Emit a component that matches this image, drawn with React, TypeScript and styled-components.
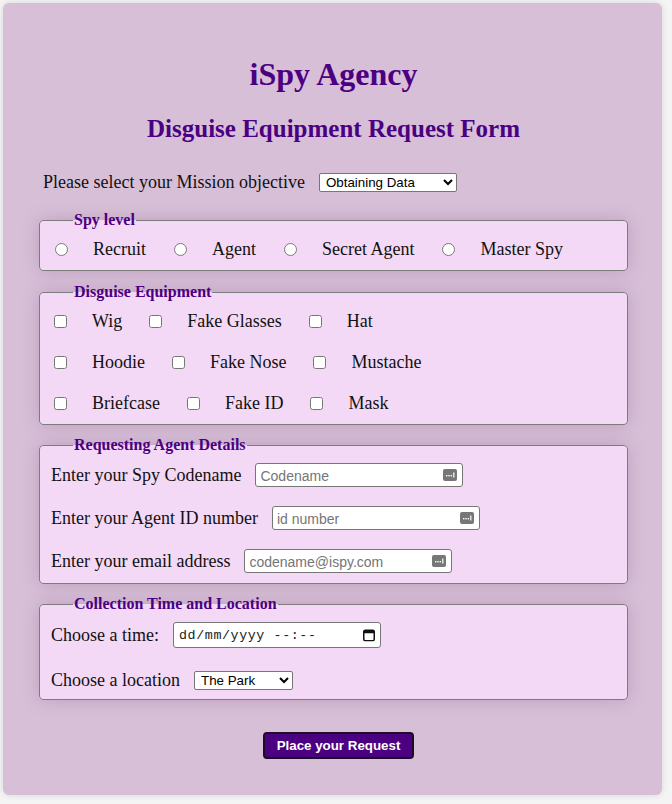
import React from "react";
import styled, { createGlobalStyle } from "styled-components";

const GlobalStyle = createGlobalStyle`
  html, body {
    margin: 0;
    padding: 0;
    background: #f4f4f4;
  }
  body {
    font-family: "Liberation Serif", "Times New Roman", serif;
    font-size: 18px;
    color: #111;
  }
  * {
    box-sizing: border-box;
  }
`;

const Page = styled.div`
  width: 659px;
  margin: 3px 0 9px 3px;
  padding: 53px 34px 36px 36px;
  background: #d8bfd8;
  border-radius: 6px;
  box-shadow: 0 0 6px rgba(0, 0, 0, 0.12);
`;

const Title = styled.h1`
  margin: 0;
  font-size: 32px;
  line-height: 37px;
  font-weight: 700;
  text-align: center;
  color: #4b0082;
`;

const SubTitle = styled.h2`
  margin: 21px 0 0;
  font-size: 25px;
  line-height: 29px;
  font-weight: 700;
  text-align: center;
  color: #4b0082;
`;

const Form = styled.form`
  display: flex;
  flex-direction: column;
`;

const MissionRow = styled.div`
  display: flex;
  align-items: center;
  gap: 14px;
  margin: 29px 0 0 4px;
  line-height: 21px;
`;

const Select = styled.select<{ $w: number }>`
  width: ${p => p.$w}px;
  height: 19px;
  padding: 0 0 0 2px;
  font-family: "Liberation Sans", Arial, sans-serif;
  font-size: 13.33px;
  color: #000;
  background: #fff;
  border: 1px solid #767676;
  border-radius: 2px;
`;

const Fieldset = styled.fieldset<{ $top: number; $bottom?: number }>`
  margin: ${p => p.$top}px 0 0;
  padding: 9px 11px ${p => p.$bottom ?? 10}px;
  background: #f4d9f6;
  border: 1px solid #7c7c7c;
  border-radius: 4px;
  box-shadow: 0 0 18px rgba(120, 80, 120, 0.28);
  min-width: 0;
`;

const Legend = styled.legend`
  margin-left: 22px;
  padding: 0 1px;
  font-size: 16px;
  line-height: 18px;
  font-weight: 700;
  color: #4b0082;
`;

const Rows = styled.div<{ $gap: number }>`
  display: flex;
  flex-direction: column;
  gap: ${p => p.$gap}px;
`;

const OptionRow = styled.div`
  display: flex;
  align-items: center;
  gap: 24px;
  line-height: 22px;
`;

const Option = styled.label`
  display: flex;
  align-items: center;
  gap: 25px;
`;

const Radio = styled.input.attrs({ type: "radio" })`
  width: 13px;
  height: 13px;
  margin: 0 0 0 4px;
`;

const Checkbox = styled.input.attrs({ type: "checkbox" })`
  width: 13px;
  height: 13px;
  margin: 0 0 0 3px;
`;

const FieldRow = styled.label`
  display: flex;
  align-items: center;
  gap: 14px;
  line-height: 24px;
`;

const InputWrap = styled.span<{ $w: number }>`
  position: relative;
  display: flex;
  width: ${p => p.$w}px;
`;

const TextInput = styled.input`
  display: block;
  width: 100%;
  height: 24px;
  padding: 1px 24px 0 4px;
  font-family: "Liberation Sans", Arial, sans-serif;
  font-size: 14px;
  color: #000;
  background: #fff;
  border: 1px solid #767676;
  border-radius: 3px;
  outline: none;

  &::placeholder {
    color: #757575;
  }
`;

const DateInput = styled(TextInput)`
  height: 26px;
  padding-left: 5px;
  font-family: "Liberation Mono", "DejaVu Sans Mono", monospace;
  font-size: 13.33px;
  letter-spacing: 0.6px;

  &::placeholder {
    color: #222;
  }
`;

const FieldIcon = styled.svg`
  position: absolute;
  top: 50%;
  right: 6px;
  transform: translateY(-50%);
  pointer-events: none;
`;

const ButtonRow = styled.div`
  display: flex;
  justify-content: center;
  margin-top: 32px;
  padding-left: 10px;
`;

const SubmitButton = styled.button`
  height: 27px;
  padding: 0 12px;
  font-family: "Liberation Sans", Arial, sans-serif;
  font-size: 13.33px;
  font-weight: 700;
  color: #fff;
  background: #4b0082;
  border: 2px solid #1e0b28;
  border-radius: 4px;
  cursor: pointer;
`;

function AutofillIcon() {
  return (
    <FieldIcon width="14" height="12" viewBox="0 0 14 12">
      <rect x="0" y="0" width="14" height="12" rx="2" fill="#777" />
      <rect x="3" y="6" width="1.4" height="1.4" fill="#fff" />
      <rect x="5.3" y="6" width="1.4" height="1.4" fill="#fff" />
      <rect x="7.6" y="6" width="1.4" height="1.4" fill="#fff" />
      <rect x="10.2" y="3.5" width="1.2" height="5" fill="#fff" />
    </FieldIcon>
  );
}

function CalendarIcon() {
  return (
    <FieldIcon width="12" height="13" viewBox="0 0 12 13">
      <rect x="0.75" y="1.75" width="10.5" height="10.5" rx="1.5" fill="none" stroke="#111" strokeWidth="1.5" />
      <rect x="0.75" y="1.75" width="10.5" height="3" fill="#111" />
    </FieldIcon>
  );
}

const spyLevels = ["Recruit", "Agent", "Secret Agent", "Master Spy"];

const equipment = [
  ["Wig", "Fake Glasses", "Hat"],
  ["Hoodie", "Fake Nose", "Mustache"],
  ["Briefcase", "Fake ID", "Mask"],
];

const agentFields = [
  { label: "Enter your Spy Codename", placeholder: "Codename", type: "text" },
  { label: "Enter your Agent ID number", placeholder: "id number", type: "text" },
  { label: "Enter your email address", placeholder: "codename@ispy.com", type: "email" },
];

export default function App() {
  return (
    <>
      <GlobalStyle />
      <Page>
        <Title>iSpy Agency</Title>
        <SubTitle>Disguise Equipment Request Form</SubTitle>
        <Form onSubmit={e => e.preventDefault()}>
          <MissionRow>
            <label htmlFor="mission">Please select your Mission objective</label>
            <Select id="mission" $w={138} defaultValue="data">
              <option value="data">Obtaining Data</option>
              <option value="surveillance">Surveillance</option>
              <option value="infiltration">Infiltration</option>
            </Select>
          </MissionRow>

          <Fieldset $top={18}>
            <Legend>Spy level</Legend>
            <OptionRow>
              {spyLevels.map(level => (
                <Option key={level}>
                  <Radio name="level" value={level} />
                  {level}
                </Option>
              ))}
            </OptionRow>
          </Fieldset>

          <Fieldset $top={12}>
            <Legend>Disguise Equipment</Legend>
            <Rows $gap={19}>
              {equipment.map((row, i) => (
                <OptionRow key={i}>
                  {row.map(item => (
                    <Option key={item}>
                      <Checkbox name="equipment" value={item} />
                      {item}
                    </Option>
                  ))}
                </OptionRow>
              ))}
            </Rows>
          </Fieldset>

          <Fieldset $top={11}>
            <Legend>Requesting Agent Details</Legend>
            <Rows $gap={19}>
              {agentFields.map(field => (
                <FieldRow key={field.label}>
                  {field.label}
                  <InputWrap $w={208}>
                    <TextInput type={field.type} placeholder={field.placeholder} />
                    <AutofillIcon />
                  </InputWrap>
                </FieldRow>
              ))}
            </Rows>
          </Fieldset>

          <Fieldset $top={11} $bottom={7}>
            <Legend>Collection Time and Location</Legend>
            <Rows $gap={20}>
              <FieldRow>
                Choose a time:
                <InputWrap $w={208}>
                  <DateInput type="text" placeholder="dd/mm/yyyy --:--" />
                  <CalendarIcon />
                </InputWrap>
              </FieldRow>
              <FieldRow>
                Choose a location
                <Select $w={99} defaultValue="park">
                  <option value="park">The Park</option>
                  <option value="cafe">The Café</option>
                  <option value="station">The Station</option>
                </Select>
              </FieldRow>
            </Rows>
          </Fieldset>

          <ButtonRow>
            <SubmitButton type="submit">Place your Request</SubmitButton>
          </ButtonRow>
        </Form>
      </Page>
    </>
  );
}
